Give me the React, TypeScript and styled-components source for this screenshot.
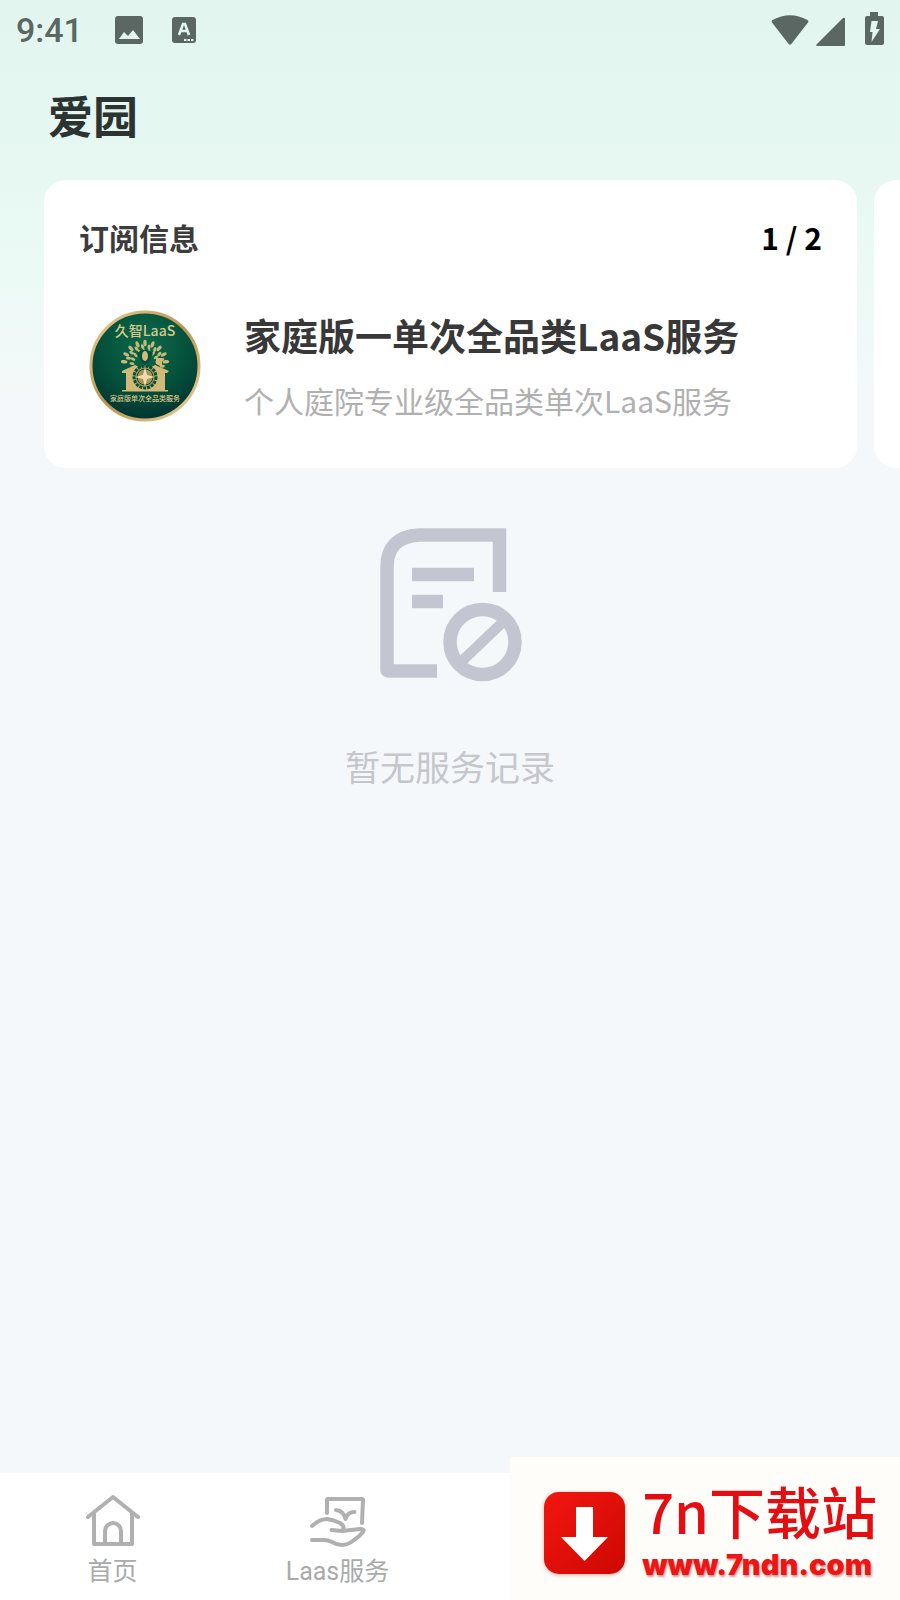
import type { ReactNode } from 'react'
import styled, { createGlobalStyle } from 'styled-components'

interface Subscription {
  id: number
  name: string
  description: string
}

const subscriptions: Subscription[] = [
  {
    id: 1,
    name: '家庭版一单次全品类LaaS服务',
    description: '个人庭院专业级全品类单次LaaS服务'
  }
]

const leaves = [-84, -63, -42, -21, 0, 21, 42, 63, 84]

export default function App() {
  return (
    <>
      <GlobalStyle />
      <Page>
        <StatusBar>
          <StatusGroup>
            <Clock>9:41</Clock>
            <PictureIcon />
            <LanguageIcon />
          </StatusGroup>
          <StatusGroup $tight>
            <WifiIcon />
            <SignalIcon />
            <BatteryIcon />
          </StatusGroup>
        </StatusBar>

        <PageTitle>爱园</PageTitle>

        <Carousel>
          {subscriptions.map((item) => (
            <Card key={item.id}>
              <CardHeader>
                <CardTitle>订阅信息</CardTitle>
                <Counter>{item.id} / 2</Counter>
              </CardHeader>
              <Product>
                <ProductBadge />
                <ProductText>
                  <ProductName>{item.name}</ProductName>
                  <ProductDescription>{item.description}</ProductDescription>
                </ProductText>
              </Product>
            </Card>
          ))}
          <Card />
        </Carousel>

        <Empty>
          <EmptyIcon />
          <EmptyText>暂无服务记录</EmptyText>
        </Empty>

        <BottomBar>
          <Tab label='首页'>
            <path d='M3 24 28 4l25 20M9 20v31h38V20' />
            <path d='M20 50V38a8 8 0 0 1 16 0v12' />
          </Tab>
          <Tab label='Laas服务'>
            <path d='M17 20V7q0-1 1-1h34q1 0 1 1l-1 23' />
            <path d='M26 17q8 1 9.500 9 2-7 9-7' />
            <path d='M2 33q8-7 15-7 7 1 13 4 6 4 2 8l-10.500-1' />
            <path d='M32 38l18-2q5 0 3 3-4 5-9 8-6 5-12 5-5 0-10-3-4-2-8-2H2' />
          </Tab>
          <Promo href='#download'>
            <DownloadIcon />
            <PromoText>
              <PromoName>7n下载站</PromoName>
              <PromoUrl>www.7ndn.com</PromoUrl>
            </PromoText>
          </Promo>
        </BottomBar>
      </Page>
    </>
  )
}

function Tab({ label, children }: { label: string; children: ReactNode }) {
  return (
    <TabButton type='button'>
      <TabIcon viewBox='0 0 56 54' aria-hidden='true'>
        {children}
      </TabIcon>
      {label}
    </TabButton>
  )
}

function PictureIcon() {
  return (
    <svg width='28' height='28' viewBox='0 0 28 28' aria-hidden='true'>
      <rect width='28' height='28' rx='3' fill='#5b6762' />
      <path d='M4 23l5-7 4 4 5-6 7 9z' fill='#e3f6f0' />
    </svg>
  )
}

function LanguageIcon() {
  return (
    <svg width='24' height='26' viewBox='0 0 24 26' aria-hidden='true'>
      <rect width='24' height='26' rx='3' fill='#5b6762' />
      <path
        d='M7 18l4-11h2l4 11M8.500 14h7'
        fill='none'
        stroke='#e3f6f0'
        strokeWidth='2.600'
      />
      <path d='M12 23h2.500m1 0h2.500m1 0h2.500' stroke='#e3f6f0' strokeWidth='2' />
    </svg>
  )
}

function WifiIcon() {
  return (
    <svg width='38' height='33' viewBox='0 0 38 33' aria-hidden='true'>
      <path
        d='M1 8.500Q0 7 1.500 6 19-3.500 36.500 6 38 7 37 8.500L20.300 30Q19 31.500 17.700 30z'
        fill='#5b6762'
      />
    </svg>
  )
}

function SignalIcon() {
  return (
    <svg width='29' height='33' viewBox='0 0 29 33' aria-hidden='true'>
      <path
        d='M27 4q2-1 2 1v26q0 1-1 1H1.500Q-.500 32 .500 30.500z'
        fill='#5b6762'
      />
    </svg>
  )
}

function BatteryIcon() {
  return (
    <BatterySvg width='19' height='33' viewBox='0 0 19 33' aria-hidden='true'>
      <path
        d='M5 0h8v4h4q2 0 2 2v25q0 2-2 2H2q-2 0-2-2V6q0-2 2-2h3z'
        fill='#5b6762'
      />
      <path d='M6.500 9H13l-2 8h4L6.500 30l1-10H5z' fill='#e3f6f0' />
    </BatterySvg>
  )
}

function ProductBadge() {
  return (
    <BadgeSvg viewBox='0 0 112 112' role='img' aria-label='久智LaaS'>
      <defs>
        <radialGradient id='badgeGreen' cx='0.5' cy='0.3' r='0.7'>
          <stop offset='0' stopColor='#0d6a4a' />
          <stop offset='0.6' stopColor='#04503b' />
          <stop offset='1' stopColor='#033431' />
        </radialGradient>
        <linearGradient id='badgeGold' x1='0' y1='0' x2='1' y2='1'>
          <stop offset='0' stopColor='#e9d295' />
          <stop offset='0.5' stopColor='#b99450' />
          <stop offset='1' stopColor='#ecd39a' />
        </linearGradient>
      </defs>
      <circle
        cx='56'
        cy='56'
        r='54'
        fill='url(#badgeGreen)'
        stroke='url(#badgeGold)'
        strokeWidth='3'
      />
      <BadgeLabel x='56' y='26' $size={14}>
        久智LaaS
      </BadgeLabel>
      <g fill='#c5b878'>
        {leaves.map((angle) => (
          <g key={angle} transform={`rotate(${angle} 56 54)`}>
            <ellipse cx='56' cy='33' rx='1.700' ry='3.300' />
            <ellipse cx='60' cy='37' rx='1.500' ry='2.600' />
            <ellipse cx='55' cy='41' rx='1.300' ry='2.600' />
          </g>
        ))}
      </g>
      <g fill='#d2b978'>
        <path d='M33 61l13-6 6 3 4-6 4 6 6-3 14 6-2 2h-2v18H37V63h-4z' />
        <path d='M67 48h6v9l-6-3z' />
        <path d='M33 80h46v1.500H33z' />
      </g>
      <path d='M48 43q8-7 16 0-3 8-8 13-5-5-8-13z' fill='#04503b' />
      <ellipse cx='56' cy='46' rx='3' ry='5' fill='#d2bd7c' />
      <circle
        cx='56'
        cy='67'
        r='11'
        fill='#a8935a'
        stroke='#04503b'
        strokeWidth='3'
        strokeDasharray='3 1'
      />
      <circle cx='56' cy='67' r='8' fill='none' stroke='#04503b' />
      <path
        d='M56 57l2 8 8 2-8 2-2 8-2-8-8-2 8-2z'
        fill='#f0deaa'
      />
      <BadgeLabel x='56' y='91' $size={7}>
        家庭版单次全品类服务
      </BadgeLabel>
    </BadgeSvg>
  )
}

function EmptyIcon() {
  return (
    <svg width='144' height='154' viewBox='0 0 144 154' aria-hidden='true'>
      <g fill='none' stroke='#c3c6d0' strokeWidth='13.500'>
        <path d='M121.500 64V7H41Q9 9 9 39v102.500q0 1.500 2 1.500h48' />
        <path d='M34 46.500h62M34 73.500h31' />
        <circle cx='104.500' cy='114' r='32.500' />
        <path d='M83 134l43-41' strokeWidth='10.500' />
      </g>
    </svg>
  )
}

function DownloadIcon() {
  return (
    <DownloadSvg width='81' height='82' viewBox='0 0 81 82' aria-hidden='true'>
      <defs>
        <linearGradient id='downloadRed' x1='0' y1='0' x2='1' y2='1'>
          <stop offset='0' stopColor='#f3160f' />
          <stop offset='1' stopColor='#cd0804' />
        </linearGradient>
      </defs>
      <rect width='81' height='82' rx='15' fill='url(#downloadRed)' />
      <path d='M32 15h17v30h15L40.500 69 17 45h15z' fill='#fff' />
    </DownloadSvg>
  )
}

const GlobalStyle = createGlobalStyle`
  * {
    box-sizing: border-box;
  }

  body {
    margin: 0;
    background: #f5f8fa;
    font-family: 'Noto Sans CJK SC', sans-serif;
  }

  h1,
  h2,
  h3,
  p {
    margin: 0;
  }
`

const Page = styled.div`
  display: flex;
  flex-direction: column;
  min-height: 100vh;
  background: linear-gradient(
      #e2f5ef 0,
      #e7f8f2 180px,
      #ebfaf5 270px,
      #f5f8fa 400px
    )
    no-repeat;
`

const StatusBar = styled.header`
  display: flex;
  align-items: center;
  justify-content: space-between;
  height: 60px;
  padding: 0 16px;
`

const StatusGroup = styled.div<{ $tight?: boolean }>`
  display: flex;
  align-items: center;
  gap: ${({ $tight }) => ($tight ? '7px' : '29px')};
`

const Clock = styled.time`
  margin-right: 3px;
  color: #5b6762;
  font: 500 34px/40px Roboto, sans-serif;
`

const BatterySvg = styled.svg`
  margin: 0 0 4px 13px;
`

const PageTitle = styled.h1`
  padding: 23px 48px 33px;
  color: #2c3432;
  font-size: 45px;
  font-weight: 700;
  line-height: 64px;
`

const Carousel = styled.section`
  display: flex;
  gap: 17px;
  padding-left: 44px;
  overflow: hidden;
`

const Card = styled.article`
  flex: 0 0 calc(100% - 43px);
  min-height: 288px;
  padding: 35px 35px 46px;
  border-radius: 22px;
  background: #fff;
`

const CardHeader = styled.div`
  display: flex;
  align-items: center;
  justify-content: space-between;
  height: 44px;
`

const CardTitle = styled.h2`
  color: #3c3c3c;
  font-size: 30px;
  font-weight: 700;
  line-height: 44px;
`

const Counter = styled.span`
  color: #000;
  font-size: 30px;
  font-weight: 700;
  line-height: 44px;
`

const Product = styled.div`
  display: flex;
  align-items: center;
  gap: 43px;
  margin: 51px 0 0 10px;
`

const BadgeSvg = styled.svg`
  flex: none;
  width: 112px;
  height: 112px;
`

const BadgeLabel = styled.text<{ $size: number }>`
  fill: #d9c88b;
  font-size: ${({ $size }) => $size}px;
  font-weight: 500;
  text-anchor: middle;
`

const ProductText = styled.div`
  display: flex;
  flex-direction: column;
  gap: 18px;
`

const ProductName = styled.h3`
  color: #383838;
  font-size: 37px;
  font-weight: 700;
  line-height: 50px;
`

const ProductDescription = styled.p`
  color: #b0b0b0;
  font-size: 30px;
  line-height: 44px;
`

const Empty = styled.main`
  display: flex;
  flex: 1;
  flex-direction: column;
  align-items: center;
  gap: 58px;
  padding-top: 60px;
`

const EmptyText = styled.p`
  color: #c5c7cd;
  font-size: 35px;
  line-height: 52px;
`

const BottomBar = styled.nav`
  position: relative;
  display: grid;
  grid-template-columns: repeat(4, 1fr);
  min-height: 127px;
  background: #fff;
`

const TabButton = styled.button`
  display: flex;
  flex-direction: column;
  align-items: center;
  gap: 7px;
  padding: 20px 0 0;
  border: 0;
  background: none;
  color: #aaa;
  font-family: Roboto, 'Noto Sans CJK SC', sans-serif;
  font-size: 25px;
  line-height: 36px;
`

const TabIcon = styled.svg`
  width: 56px;
  height: 54px;
  fill: none;
  stroke: #b0b0b0;
  stroke-width: 4;
  stroke-linecap: round;
  stroke-linejoin: round;
`

/* sits over the right-hand half of the tab bar */
const Promo = styled.a`
  position: absolute;
  right: 0;
  bottom: 0;
  display: flex;
  align-items: center;
  gap: 17px;
  height: 143px;
  padding: 8px 23px 0 34px;
  background: #fefdf9;
  text-decoration: none;
`

const DownloadSvg = styled.svg`
  flex: none;
  filter: drop-shadow(0 1px 2px rgba(160, 60, 40, 0.4));
`

const PromoText = styled.span`
  display: flex;
  flex-direction: column;
  margin-bottom: 12px;
`

const PromoName = styled.span`
  color: #e30d12;
  font-size: 56px;
  font-weight: 500;
  line-height: 76px;
`

const PromoUrl = styled.span`
  color: #ee1515;
  font: 900 29px/34px Inter, sans-serif;
  text-shadow: 1px 2px 2px rgba(150, 20, 20, 0.4);
`
